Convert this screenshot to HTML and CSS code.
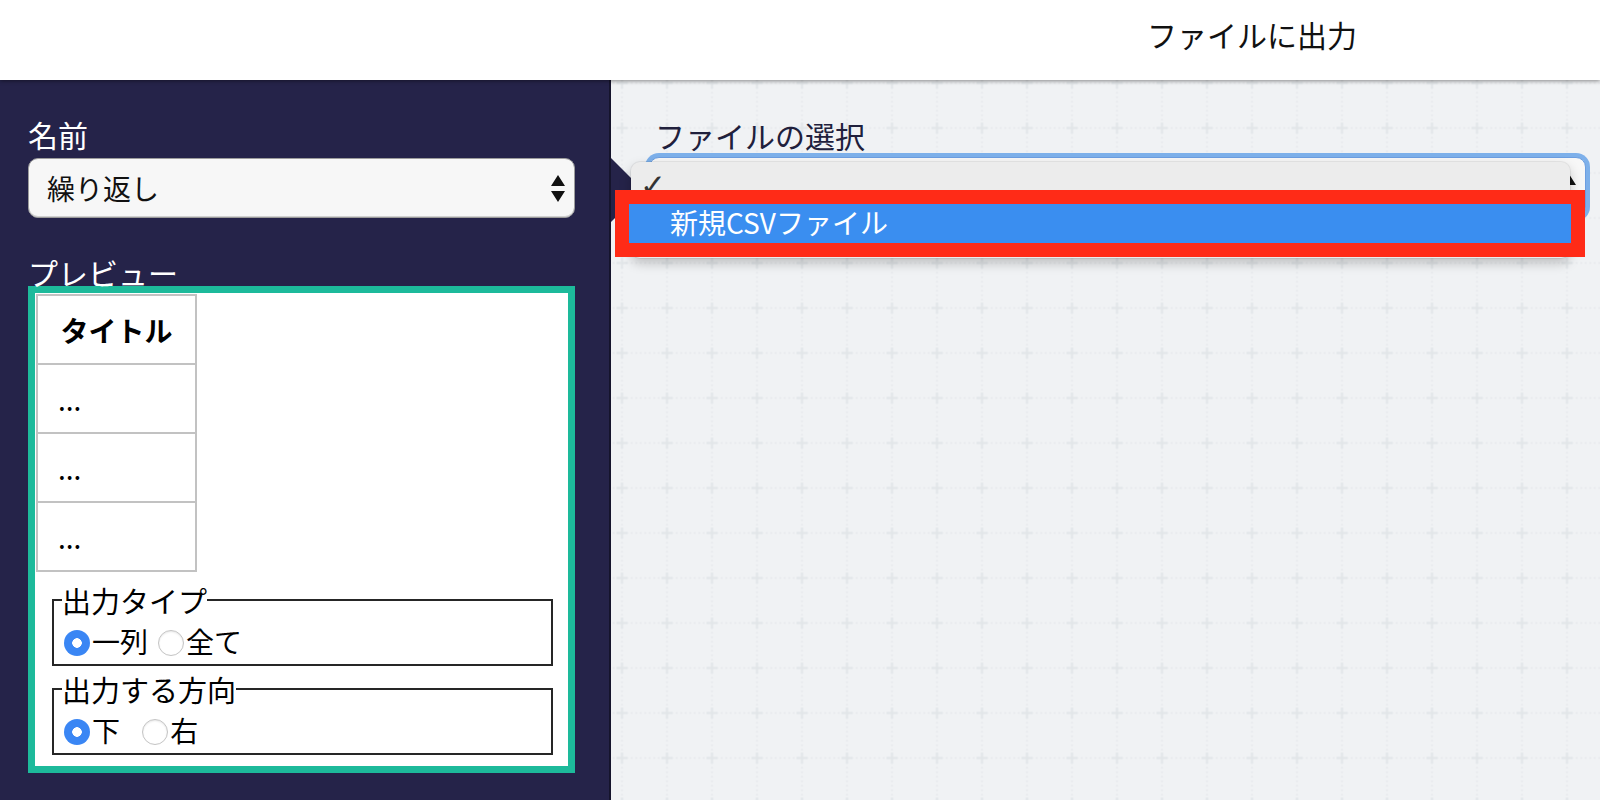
FILE: index.html
```html
<!DOCTYPE html>
<html lang="ja">
<head>
<meta charset="utf-8">
<title>ファイルに出力</title>
<link rel="stylesheet" href="styles.css">
</head>
<body>
<div class="app">
  <header class="topbar"><span class="title">ファイルに出力</span></header>
  <div class="main">
    <aside class="sidebar">
      <div class="lbl lbl-name">名前</div>
      <div class="select select-side">
        <span class="select-text">繰り返し</span>
        <svg class="arrows" width="14" height="27" viewBox="0 0 14 27"><path d="M0 11 L7 0 L14 11Z M0 16 L14 16 L7 27Z" fill="#111"/></svg>
      </div>
      <div class="lbl lbl-preview">プレビュー</div>
      <div class="preview">
        <table class="ptable">
          <tr><th>タイトル</th></tr>
          <tr><td>...</td></tr>
          <tr><td>...</td></tr>
          <tr><td>...</td></tr>
        </table>
        <fieldset class="fs fs-type">
          <legend>出力タイプ</legend>
          <div class="row"><label class="opt"><input type="radio" name="t" checked>一列</label><label class="opt"><input type="radio" name="t">全て</label></div>
        </fieldset>
        <fieldset class="fs fs-dir">
          <legend>出力する方向</legend>
          <div class="row"><label class="opt"><input type="radio" name="d" checked>下</label> <label class="opt opt-gap"><input type="radio" name="d">右</label></div>
        </fieldset>
      </div>
    </aside>
    <section class="canvas">
      <svg class="grid" width="100%" height="100%">
        <defs>
          <pattern id="gridtile" width="45" height="45" patternUnits="userSpaceOnUse" x="-11.5" y="-19.5">
            <line x1="0" y1="22.5" x2="45" y2="22.5" stroke="#e3e6e9" stroke-width="1.5" stroke-dasharray="1.5 3"/>
            <line x1="22.5" y1="0" x2="22.5" y2="45" stroke="#e3e6e9" stroke-width="1.5" stroke-dasharray="1.5 3"/>
            <path d="M17 22.5H28M22.5 17V28" stroke="#e1e5e8" stroke-width="2"/>
          </pattern>
        </defs>
        <rect width="100%" height="100%" fill="url(#gridtile)"/>
      </svg>
      <div class="lbl lbl-dark">ファイルの選択</div>
      <div class="select select-focus">
        <span class="select-text"></span>
        <svg class="arrows" width="14" height="27" viewBox="0 0 14 27"><path d="M0 11 L7 0 L14 11Z M0 16 L14 16 L7 27Z" fill="#111"/></svg>
      </div>
      <div class="menu"><div class="menu-check">✓</div></div>
      <div class="callout"><div class="callout-option">新規CSVファイル</div></div>
    </section>
  </div>
</div>
</body>
</html>
```
FILE: styles.css
```css
html, body {
  margin: 0;
  padding: 0;
}
body {
  width: 1600px;
  height: 800px;
  overflow: hidden;
  font-family: "Noto Sans CJK JP", "Noto Sans", sans-serif;
  color: #111;
  background: #fff;
}
.app {
  display: flex;
  flex-direction: column;
  height: 800px;
}
.topbar {
  position: relative;
  z-index: 5;
  height: 80px;
  box-sizing: border-box;
  background: #fff;
  box-shadow: 0 1px 4px rgba(0, 0, 0, 0.45);
  text-align: right;
  padding: 16px 243px 0 0;
}
.title {
  font-size: 30px;
  line-height: 36px;
  color: #111;
}
.main {
  display: flex;
  height: 720px;
  overflow: hidden;
}
.sidebar {
  position: relative;
  z-index: 1;
  width: 611px;
  flex: none;
  box-sizing: border-box;
  background: #252349;
  border-right: 2px solid #15142c;
  padding: 36px 0 0 28px;
}
.sidebar::after {
  content: "";
  position: absolute;
  right: -34px;
  top: 78px;
  width: 0;
  height: 0;
  border-left: 32px solid #252349;
  border-top: 32px solid transparent;
  border-bottom: 32px solid transparent;
}
.lbl {
  font-size: 30px;
  line-height: 36px;
  color: #fff;
}
.lbl-preview {
  margin-top: 36px;
  margin-bottom: -4px;
}
.select {
  display: flex;
  align-items: center;
  justify-content: space-between;
  height: 60px;
  box-sizing: border-box;
  border: 1px solid #9c9c9c;
  border-radius: 10px;
  background: #f7f7f7;
  box-shadow: inset 0 -1px 0 #d0d0d0;
  padding: 0 9px 0 18px;
  font-size: 28px;
  color: #111;
}
.select-side {
  width: 547px;
  margin-top: 6px;
}
.preview {
  width: 547px;
  height: 487px;
  box-sizing: border-box;
  border: 7px solid #1dba9b;
  background: #fff;
  padding-top: 1px;
}
.ptable {
  border-spacing: 0;
  border-top: 2px solid #c2c2c2;
  border-left: 2px solid #c2c2c2;
  margin-left: 1px;
  width: 161px;
  font-size: 28px;
  color: #000;
}
.ptable th,
.ptable td {
  border-right: 2px solid #c2c2c2;
  border-bottom: 2px solid #c2c2c2;
  padding: 14px 20px 13px;
  line-height: 40px;
  text-align: left;
}
.ptable th {
  font-weight: bold;
  text-align: center;
}
.fs {
  margin: 13px 15px 0 17px;
  padding: 0 0 3px 0;
  border: 2px solid #262626;
  min-width: 0;
}
.fs-dir {
  margin-top: 8px;
}
.fs legend {
  padding: 0;
  margin-left: 8px;
  font-size: 29px;
  line-height: 30px;
  color: #000;
}
.row {
  margin-top: 6px;
  font-size: 28px;
  line-height: 40px;
  color: #000;
}
.opt input {
  appearance: none;
  -webkit-appearance: none;
  box-sizing: border-box;
  width: 26px;
  height: 26px;
  margin: 0 2px 0 10px;
  border-radius: 50%;
  border: 1px solid #c4c4c4;
  background: #fff;
  box-shadow: inset 0 1px 2px rgba(0, 0, 0, 0.1);
  vertical-align: -3px;
}
.opt input:checked {
  border: none;
  box-shadow: none;
  background: radial-gradient(circle at center, #fff 0 4.5px, #3a86f4 5px);
}
.opt-gap input {
  margin-left: 16px;
}
.canvas {
  position: relative;
  flex: 1;
  background: #f0f2f4;
  padding: 37px 0 0 38px;
}
.grid {
  position: absolute;
  left: 0;
  top: 0;
  z-index: 0;
}
.lbl-dark {
  position: relative;
  z-index: 2;
  color: #20203c;
  margin-left: 6px;
}
.select-focus {
  position: relative;
  z-index: 2;
  width: 937px;
  margin-top: 4px;
  border-color: #6c9ee0;
  box-shadow: 0 0 0 4px #7db0ea;
}
.menu {
  position: absolute;
  z-index: 3;
  left: 20px;
  top: 82px;
  width: 939px;
  height: 96px;
  box-sizing: border-box;
  background: #ececec;
  border-radius: 9px;
  box-shadow: 0 5px 12px rgba(0, 0, 0, 0.22), 0 0 0 1px rgba(0, 0, 0, 0.06);
  padding: 6px 0 0 9px;
}
.menu-check {
  font-family: "DejaVu Sans", sans-serif;
  font-size: 31px;
  line-height: 34px;
  color: #333;
}
.callout {
  position: absolute;
  z-index: 4;
  left: 4px;
  top: 110px;
  width: 970px;
  height: 67px;
  box-sizing: border-box;
  border: 14px solid #ff2b17;
  background: #3a8ef0;
}
.callout-option {
  color: #fff;
  font-size: 28px;
  line-height: 37px;
  padding-left: 41px;
}
```
